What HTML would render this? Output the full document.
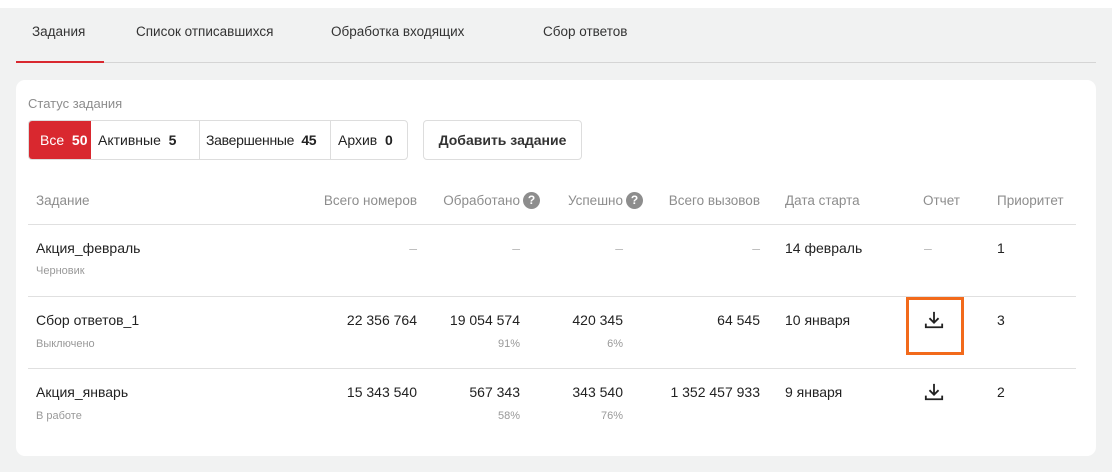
<!DOCTYPE html>
<html><head><meta charset="utf-8"><style>
*{margin:0;padding:0;box-sizing:border-box}
body{width:1112px;height:472px;background:#f1f2f2;font-family:"Liberation Sans",sans-serif;position:relative;overflow:hidden;color:#222}
.top{position:absolute;left:0;top:0;width:1112px;height:8px;background:#fff}
.a{position:absolute;white-space:nowrap}
.tab{font-size:13.5px;color:#333;top:24px}
.card{position:absolute;left:16px;top:80px;width:1080px;height:376px;background:#fff;border-radius:9px}
.h{font-size:13.5px;color:#8d8d8d;top:192px;line-height:17px}
.r{text-align:right}
.v{font-size:14px;color:#222}
.s{font-size:11px;color:#999}
.line{position:absolute;left:28px;width:1048px;height:1px;background:#e0e0e0}
.q{position:absolute;right:-20px;top:0;width:17px;height:17px;border-radius:50%;background:#8d8d8d;color:#fff;font-size:12px;font-weight:bold;text-align:center;line-height:17px}
.dash{color:#bbb}
.seg{flex:none;height:38px;line-height:38px;padding-left:9px}
</style></head><body>
<div class="top"></div>
<div class="a tab" style="left:32px">Задания</div>
<div class="a tab" style="left:136px">Список отписавшихся</div>
<div class="a tab" style="left:331px">Обработка входящих</div>
<div class="a tab" style="left:543px">Сбор ответов</div>
<div class="a" style="left:16px;top:62px;width:1080px;height:1px;background:#d5d5d5"></div>
<div class="a" style="left:16px;top:61px;width:88px;height:2px;background:#d9282f"></div>
<div class="card"></div>
<div class="a" style="left:28px;top:96px;font-size:13px;color:#8d8d8d">Статус задания</div>
<div class="a" style="left:28px;top:120px;width:380px;height:40px;border:1px solid #ddd;border-radius:4px;overflow:hidden;font-size:14px;display:flex">
<div class="seg" style="width:62px;background:#d9282f;color:#fff;padding-left:11px">Все&nbsp;&nbsp;<b>50</b></div>
<div class="seg" style="width:109px;border-right:1px solid #ddd;padding-left:7px">Активные&nbsp;&nbsp;<b>5</b></div>
<div class="seg" style="width:131px;border-right:1px solid #ddd;padding-left:6px;letter-spacing:-0.3px">Завершенные&nbsp;&nbsp;<b>45</b></div>
<div class="seg" style="padding-left:7px">Архив&nbsp;&nbsp;<b>0</b></div>
</div>
<div class="a" style="left:423px;top:120px;width:159px;height:40px;border:1px solid #ddd;border-radius:4px;font-size:14px;font-weight:bold;color:#333;text-align:center;line-height:38px">Добавить задание</div>

<div class="a h" style="left:36px">Задание</div>
<div class="a h r" style="right:695px">Всего номеров</div>
<div class="a h r" style="right:592px">Обработано<span class="q">?</span></div>
<div class="a h r" style="right:489px">Успешно<span class="q">?</span></div>
<div class="a h r" style="right:352px">Всего вызовов</div>
<div class="a h" style="left:785px">Дата старта</div>
<div class="a h" style="left:923px">Отчет</div>
<div class="a h" style="left:997px">Приоритет</div>
<div class="line" style="top:224px"></div>

<div class="a v" style="left:36px;top:240px">Акция_февраль</div>
<div class="a s" style="left:36px;top:265px">Черновик</div>
<div class="a v r dash" style="right:695px;top:240px">–</div>
<div class="a v r dash" style="right:592px;top:240px">–</div>
<div class="a v r dash" style="right:489px;top:240px">–</div>
<div class="a v r dash" style="right:352px;top:240px">–</div>
<div class="a v" style="left:785px;top:240px">14 февраль</div>
<div class="a v dash" style="left:924px;top:240px">–</div>
<div class="a v" style="left:997px;top:240px">1</div>
<div class="line" style="top:296px"></div>

<div class="a v" style="left:36px;top:312px">Сбор ответов_1</div>
<div class="a s" style="left:36px;top:338px">Выключено</div>
<div class="a v r" style="right:695px;top:312px">22 356 764</div>
<div class="a v r" style="right:592px;top:312px">19 054 574</div>
<div class="a s r" style="right:592px;top:338px">91%</div>
<div class="a v r" style="right:489px;top:312px">420 345</div>
<div class="a s r" style="right:489px;top:338px">6%</div>
<div class="a v r" style="right:352px;top:312px">64 545</div>
<div class="a v" style="left:785px;top:312px">10 января</div>
<div class="a v" style="left:997px;top:312px">3</div>
<div class="a" style="left:906px;top:297px;width:58px;height:58px;border:3px solid #f26a1b"></div>
<svg class="a" style="left:924px;top:310px" width="20" height="20" viewBox="0 0 22 22"><path d="M11 2v12M6 9l5 5 5-5M2 15v4h18v-4" fill="none" stroke="#222" stroke-width="2"/></svg>
<div class="line" style="top:368px"></div>

<div class="a v" style="left:36px;top:384px">Акция_январь</div>
<div class="a s" style="left:36px;top:410px">В работе</div>
<div class="a v r" style="right:695px;top:384px">15 343 540</div>
<div class="a v r" style="right:592px;top:384px">567 343</div>
<div class="a s r" style="right:592px;top:410px">58%</div>
<div class="a v r" style="right:489px;top:384px">343 540</div>
<div class="a s r" style="right:489px;top:410px">76%</div>
<div class="a v r" style="right:352px;top:384px">1 352 457 933</div>
<div class="a v" style="left:785px;top:384px">9 января</div>
<div class="a v" style="left:997px;top:384px">2</div>
<svg class="a" style="left:924px;top:382px" width="20" height="20" viewBox="0 0 22 22"><path d="M11 2v12M6 9l5 5 5-5M2 15v4h18v-4" fill="none" stroke="#222" stroke-width="2"/></svg>
</body></html>
